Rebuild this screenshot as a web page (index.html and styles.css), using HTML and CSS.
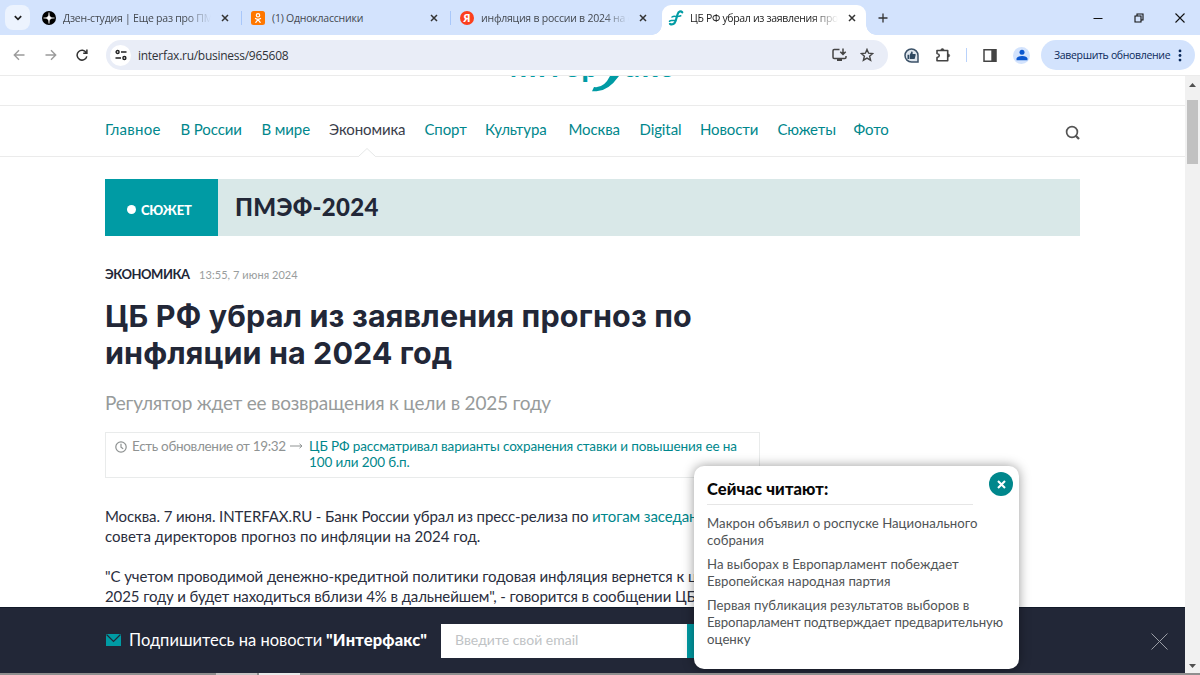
FILE: index.html
```html
<!DOCTYPE html>
<html lang="ru">
<head>
<meta charset="utf-8">
<title>ЦБ РФ убрал из заявления прогноз по инфляции на 2024 год</title>
<link rel="stylesheet" href="styles.css">
</head>
<body>
<div class="window">
  <div class="tabs">
    <div class="tab-search"><svg width="10" height="8" viewBox="0 0 10 8"><path d="M1.8 2.2 5 5.3 8.2 2.2" fill="none" stroke="#1f1f1f" stroke-width="1.7"/></svg></div>
    <div class="tab tab-1">
      <svg width="14" height="14" viewBox="0 0 14 14"><circle cx="7" cy="7" r="7" fill="#000"/><path d="M7 1.5C7.2 5.8 8.2 6.8 12.5 7 8.2 7.2 7.2 8.2 7 12.5 6.8 8.2 5.8 7.2 1.5 7 5.800 6.8 6.8 5.8 7 1.500Z" fill="#fff" stroke="#fff" stroke-width=".5"/></svg>
      <span class="tab-title fade">Дзен-студия | Еще раз про ПМ</span>
      <svg class="x" viewBox="0 0 8 8"><path d="M1 1 7 7M7 1 1 7"/></svg>
    </div>
    <div class="tab tab-2">
      <svg width="14" height="14" viewBox="0 0 14 14"><rect width="14" height="14" rx="2.500" fill="#ff7700"/><circle cx="7" cy="4.300" r="1.700" fill="none" stroke="#fff" stroke-width="1.200"/><path d="M4.500 7.500Q7 9.200 9.500 7.500M7 8.600 4.800 11.300M7 8.600 9.200 11.300" fill="none" stroke="#fff" stroke-width="1.300" stroke-linecap="round"/></svg>
      <span class="tab-title">(1) Одноклассники</span>
      <svg class="x" viewBox="0 0 8 8"><path d="M1 1 7 7M7 1 1 7"/></svg>
    </div>
    <div class="tab tab-3">
      <span class="ya">Я</span>
      <span class="tab-title fade">инфляция в россии в 2024 на с</span>
      <svg class="x" viewBox="0 0 8 8"><path d="M1 1 7 7M7 1 1 7"/></svg>
    </div>
    <div class="tab tab-4 active">
      <svg width="16" height="16" viewBox="0 0 16 16" fill="none" stroke="#009ba4" stroke-linecap="round"><path d="M14.200 2.300C12.800 .6 10.500 1.300 9.500 4.500L7.600 11C6.700 14 4 15.300 2 13.800" stroke-width="2.200"/><path d="M4 7C6.500 5.300 9 7.600 12.800 5.800M1.500 11.300C3 9.300 5 11.300 7.500 10.300" stroke-width="1.500"/></svg>
      <span class="tab-title fade">ЦБ РФ убрал из заявления прог</span>
      <svg class="x" viewBox="0 0 8 8"><path d="M1 1 7 7M7 1 1 7"/></svg>
    </div>
    <svg class="plus" width="10" height="10" viewBox="0 0 10 10"><path d="M5 .5v9M.5 5h9" stroke="#333" stroke-width="1.300"/></svg>
    <div class="controls">
      <svg width="10" height="10" viewBox="0 0 10 10"><path d="M.5 5.500h9" stroke="#111"/></svg>
      <svg width="10" height="10" viewBox="0 0 10 10" fill="none" stroke="#111" stroke-width="1.100"><path d="M1 3h6v6H1zM3 3V1h6v6H7"/></svg>
      <svg width="10" height="10" viewBox="0 0 10 10"><path d="M.5.5l9 9M9.500.5l-9 9" stroke="#111" stroke-width="1.100"/></svg>
    </div>
  </div>

  <div class="toolbar">
    <svg class="nav-ico" viewBox="0 0 12 12" stroke="#9b9b9b"><path d="M11.500 6H1.500M6 1.300 1.300 6 6 10.700"/></svg>
    <svg class="nav-ico" viewBox="0 0 12 12" stroke="#9b9b9b"><path d="M.5 6H10.500M6 1.300 10.700 6 6 10.700"/></svg>
    <svg class="nav-ico" viewBox="0 0 12 12" stroke="#333"><path d="M10.300 3.800A4.900 4.900 0 1 0 10.800 7.300M10.900.6V4.300H7.200" stroke-width="1.500"/></svg>
    <div class="address">
      <span class="site-info"><svg width="12" height="12" viewBox="0 0 12 12" fill="none" stroke="#222" stroke-width="1.400"><circle cx="2.600" cy="3" r="1.500"/><path d="M6 3h5.500M.5 9H6"/><circle cx="9.400" cy="9" r="1.500"/></svg></span>
      <span class="url">interfax.ru/business/965608</span>
      <svg class="install" width="15" height="14" viewBox="0 0 15 14" fill="none" stroke="#444" stroke-width="1.500"><path d="M7.500 1.500H2.200Q1 1.500 1 2.700V9.300Q1 10.500 2.200 10.500H12.800Q14 10.500 14 9.300V8M11 .5V6M8.300 3.700 11 6.400 13.700 3.700"/><path d="M5 12h5" stroke-width="2"/></svg>
      <svg width="14" height="14" viewBox="0 0 14 14" fill="none" stroke="#444" stroke-width="1.400"><path d="M7 1.400 8.600 5.200 12.700 5.500 9.600 8.200 10.600 12.200 7 10.100 3.400 12.200 4.400 8.200 1.300 5.500 5.400 5.200Z"/></svg>
    </div>
    <svg class="like" width="15" height="15" viewBox="0 0 15 15"><path d="M7.500 1A6.500 6.500 0 1 0 7.500 14H14V7.500A6.500 6.500 0 0 0 7.500 1Z" fill="#dfe6ee" stroke="#3c5268" stroke-width="1.500"/><path d="M3.500 6.800h1.700v4.200H3.500zM5.800 6.800 7.700 3.200Q9.200 3.300 8.600 6H11.300Q11.900 6.300 11.600 7.300L10.800 10.500Q10.600 11 10 11H5.800Z" fill="#2f4961"/></svg>
    <svg class="puzzle" width="16" height="16" viewBox="0 0 16 16" fill="none" stroke="#444" stroke-width="1.600"><path d="M2 3.500H12.700V13.700H2V10.600Q4.300 10 4.300 8.500T2 6.500Z" stroke-linejoin="round"/><path d="M5.800 3.200Q5.800 1.500 7.400 1.500T9 3.200ZM13 7Q14.700 7 14.700 8.500T13 10Z" fill="#444" stroke-width=".6"/></svg>
    <span class="sep"></span>
    <svg class="panel" width="14" height="13" viewBox="0 0 14 13"><path d="M1 .8h12v11.400H1z" fill="none" stroke="#444" stroke-width="1.500"/><path d="M8.300.8H13v11.400H8.300z" fill="#444"/></svg>
    <span class="avatar"><svg width="12" height="12" viewBox="0 0 12 12" fill="#0b57d0"><circle cx="6" cy="3.200" r="2.500"/><path d="M.5 11.300V9.500Q1.200 7.100 6 7T11.500 9.500V11.300Z"/></svg></span>
    <div class="update"><span>Завершить обновление</span><svg width="4" height="13" viewBox="0 0 4 13" fill="#0b2a5b"><circle cx="2" cy="1.900" r="1.400"/><circle cx="2" cy="6.500" r="1.400"/><circle cx="2" cy="11.100" r="1.400"/></svg></div>
  </div>

  <div class="viewport">
    <div class="page">
      <div class="masthead">
        <svg class="logo" width="170" height="16" viewBox="0 0 170 16"><text class="logo-text" x="0" y="1" textLength="88">интер</text><text class="logo-text" x="115" y="1" textLength="48">акс</text><path d="M109 0Q98 15.500 86 15.200H82L84 11Q94 12.500 100 0Z" fill="#009ba4"/></svg>
      </div>
      <div class="menu">
        <nav class="links">
          <a class="first">Главное</a><a>В России</a><a>В мире</a><a class="current">Экономика</a><a>Спорт</a><a>Культура</a><a>Москва</a><a>Digital</a><a>Новости</a><a>Сюжеты</a><a>Фото</a>
        </nav>
        <svg class="search" width="16" height="16" viewBox="0 0 16 16" fill="none" stroke="#555" stroke-width="1.700"><circle cx="7" cy="7" r="5.400"/><path d="M10.500 10.500 14 14" stroke-width="2.300"/></svg>
        <svg class="notch" width="18" height="10" viewBox="0 0 18 10"><path d="M1 9 9 1.500 17 9V10H1Z" fill="#fff"/><path d="M1 9 9 1.500 17 9" fill="none" stroke="#e6e8e8"/></svg>
      </div>

      <main class="content">
        <div class="story"><span class="story-tag"><i></i>СЮЖЕТ</span><span class="story-name">ПМЭФ-2024</span></div>
        <div class="meta"><span class="rubric">ЭКОНОМИКА</span><span class="date">13:55, 7 июня 2024</span></div>
        <h1><span class="h-a">ЦБ РФ убрал из заявления прогноз по</span><br><span class="h-b">инфляции на 2024 год</span></h1>
        <div class="lead">Регулятор ждет ее возвращения к цели в 2025 году</div>
        <div class="related">
          <svg width="12" height="12" viewBox="0 0 12 12" fill="none" stroke="#8d9191" stroke-width="1.200"><circle cx="6" cy="6" r="5.200"/><path d="M6 2.800V6.300L8.200 7.800"/></svg>
          <span class="related-when">Есть обновление от 19:32 <svg width="13" height="6" viewBox="0 0 13 6"><path d="M0 3H12M9.500.8 12 3 9.500 5.200" fill="none" stroke="#8f9393"/></svg></span>
          <a class="related-link">ЦБ РФ рассматривал варианты сохранения ставки и повышения ее на<br>100 или 200 б.п.</a>
        </div>
        <p class="p-1"><span>Москва. 7 июня. INTERFAX.RU - Банк России убрал из пресс-релиза по <a>итогам заседан</a></span><br><span class="wide">совета директоров прогноз по инфляции на 2024 год.</span></p>
        <p><span class="tight">"С учетом проводимой денежно-кредитной политики годовая инфляция вернется к ц</span><br><span>2025 году и будет находиться вблизи 4% в дальнейшем", - говорится в сообщении ЦБ</span></p>
      </main>

      <div class="subscribe">
        <svg width="15" height="12" viewBox="0 0 15 12"><path d="M0 0h15v12H0z" fill="#009ba4"/><path d="M.5.5 7.500 7.500 14.500.5" fill="none" stroke="#222737" stroke-width="1.200"/></svg>
        <span class="sub-text">Подпишитесь на новости</span><b>"Интерфакс"</b>
        <div class="email">Введите свой email</div><div class="go"></div>
        <svg class="dismiss" width="17" height="17" viewBox="0 0 17 17"><path d="M.5.5l16 16M16.500.5l-16 16" stroke="#9a9da5"/></svg>
      </div>

      <aside class="popup">
        <div class="popup-title">Сейчас читают:</div>
        <div class="popup-item">Макрон объявил о роспуске Национального<br>собрания</div>
        <div class="popup-item">На выборах в Европарламент побеждает<br>Европейская народная партия</div>
        <div class="popup-item">Первая публикация результатов выборов в<br><span class="snug">Европарламент подтверждает предварительную</span><br>оценку</div>
        <span class="popup-close"><svg width="9" height="9" viewBox="0 0 9 9"><path d="M1 1l7 7M8 1l-7 7" stroke="#fff" stroke-width="2.100"/></svg></span>
      </aside>
    </div>
    <div class="scrollbar">
      <svg width="7" height="4" viewBox="0 0 7 4"><path d="M3.500 0 7 4H0Z" fill="#505050"/></svg>
      <span class="thumb"></span>
      <svg class="down" width="7" height="4" viewBox="0 0 7 4"><path d="M0 0H7L3.500 4Z" fill="#505050"/></svg>
    </div>
  </div>
  <div class="edge"><i></i><i class="light"></i></div>
</div>
</body>
</html>
```
FILE: styles.css
```css
* { box-sizing: border-box; }
body { margin: 0; overflow: hidden; font-family: "Lato", "Open Sans", sans-serif; }
svg { display: block; flex: none; }
.window { width: 1200px; height: 675px; display: flex; flex-direction: column; background: #fff; }

/* Tab strip */
.tabs { height: 35px; flex: none; display: flex; align-items: center; background: #d3e3fd; font: 10.500px/14px "Open Sans", sans-serif; color: #444950; position: relative; }
.tab-search { width: 25px; height: 25px; margin-left: 5px; border-radius: 8px; background: #ecf3fe; display: flex; align-items: center; justify-content: center; }
.tab { height: 35px; display: flex; align-items: center; }
.tab-title { white-space: nowrap; overflow: hidden; margin-left: 7px; flex: 1; letter-spacing: -.22px; padding-top: 1px; }
.fade { -webkit-mask-image: linear-gradient(90deg, #000 calc(100% - 26px), transparent); mask-image: linear-gradient(90deg, #000 calc(100% - 26px), transparent); }
.x { width: 8px; height: 8px; margin-left: 10px; }
.x path { stroke: #333; stroke-width: 1.500; }
.tab-1 { width: 187px; margin-left: 12px; }
.tab-2 { width: 197px; padding-left: 9px; margin-left: 12px; border-image: linear-gradient(#0000 32%, #a8c7fa 32% 70%, #0000 70%) 1; border-left: 1px solid; }
.tab-3 { width: 197px; padding-left: 9px; margin-left: 12px; border-image: linear-gradient(#0000 32%, #a8c7fa 32% 70%, #0000 70%) 1; border-left: 1px solid; }
.ya { width: 14px; height: 14px; border-radius: 7px; background: #fc3f1d; color: #fff; font: 700 11px/14px "Open Sans", sans-serif; text-align: center; }
.tab-4 { width: 204px; height: 30px; margin: 5px 0 0 15px; padding: 0 10px 0 6px; border-radius: 9px 9px 0 0; background: #fff; color: #222; position: relative; }
.tab-4 > * { margin-top: -5px; }
.tab-4 .tab-title { margin-left: 6px; letter-spacing: -.32px; }
.tab-4::before, .tab-4::after { content: ""; position: absolute; bottom: 0; width: 10px; height: 10px; }
.tab-4::before { left: -10px; background: radial-gradient(circle at 0 0, #0000 9.500px, #fff 10px); }
.tab-4::after { right: -10px; background: radial-gradient(circle at 100% 0, #0000 9.500px, #fff 10px); }
.plus { margin-left: 12px; }
.controls { margin-left: auto; margin-right: 15px; display: flex; gap: 31px; }

/* Toolbar */
.toolbar { height: 41px; flex: none; display: flex; align-items: center; border-bottom: 1px solid #ebebeb; padding-left: 13px; }
.nav-ico { width: 12px; height: 12px; margin-right: 19.500px; fill: none; stroke-width: 1.400; }
.address { width: 782px; height: 30px; border-radius: 15px; background: #e9edf7; display: flex; align-items: center; padding: 0 14px 0 4px; margin-left: -1.500px; }
.site-info { width: 21px; height: 21px; border-radius: 50%; background: #fff; display: flex; align-items: center; justify-content: center; }
.url { font: 12px/16px "Open Sans", sans-serif; letter-spacing: -.27px; color: #2f3237; margin-left: 7px; padding-top: 1px; }
.install { margin-left: auto; margin-right: 13px; }
.like { margin-left: 16px; }
.puzzle { margin-left: 16px; }
.sep { width: 1px; height: 14px; background: #b9d2fb; margin-left: 15px; }
.panel { margin-left: 16px; }
.avatar { width: 17px; height: 17px; border-radius: 50%; background: #d3e3fd; margin-left: 16px; display: flex; align-items: center; justify-content: center; }
.update { width: 154px; height: 30px; margin-left: 11px; border-radius: 15px; background: #d3e3fd; color: #0b2a5b; font: 10.500px/14px "Open Sans", sans-serif; letter-spacing: -.33px; display: flex; align-items: center; justify-content: space-between; padding: 0 13px; }

/* Page */
.viewport { flex: 1; min-height: 0; display: flex; }
.page { width: 1185px; position: relative; overflow: hidden; }
.masthead { height: 30px; border-bottom: 1px solid #ebebeb; padding-left: 510px; }
.logo { overflow: hidden; }
.logo-text { font: 900 29px "Lato", sans-serif; fill: #009ba4; }
.menu { height: 51px; border-bottom: 1px solid #ebebeb; padding: 0 104px 0 105px; display: flex; justify-content: space-between; position: relative; }
.links { display: grid; grid-template-columns: 75.500px 81px 67.500px 95.500px 60.500px 83.500px 71px 60.500px 77.500px 76px 40px; font-size: 15px; line-height: 20px; padding-top: 13px; letter-spacing: -.1px; color: #00878c; }
.links .first { letter-spacing: .3px; }
.links .current { color: #3a3d4a; }
.search { margin-top: 19px; }
.notch { position: absolute; left: 358px; bottom: -1px; }
.content { padding: 22px 105px 0; }
.story { height: 57px; display: flex; background: #d9e8e8; }
.story-tag { width: 113px; background: #009ba4; color: #fff; font-weight: 900; font-size: 13px; letter-spacing: -.2px; display: flex; align-items: center; padding: 4px 0 0 22px; }
.story-tag i { width: 9px; height: 9px; border-radius: 50%; background: #fff; margin-right: 5px; }
.story-name { font-weight: 900; font-size: 24px; line-height: 56px; letter-spacing: .3px; color: #222737; margin-left: 17px; }
.meta { display: flex; align-items: baseline; margin-top: 29px; line-height: 18px; }
.rubric { font-weight: 700; font-size: 13px; letter-spacing: -.45px; color: #222737; width: 94px; }
.date { font-size: 11px; letter-spacing: .06px; color: #999d9d; }
h1 { margin: 13px 0 0; font-family: "Inter", "Lato", sans-serif; font-weight: 700; font-size: 30.500px; line-height: 37px; color: #222737; white-space: nowrap; }
.h-a { letter-spacing: .15px; }
.h-b { letter-spacing: .08px; }
.lead { font-size: 19px; line-height: 26px; letter-spacing: -.19px; color: #979b9b; margin-top: 19px; }
.related { width: 655px; height: 46px; margin-top: 16px; border: 1px solid #e9ebeb; padding: 5px 9px; display: flex; font-size: 13.500px; line-height: 16px; }
.related > svg { margin-top: 3px; }
.related-when { width: 177px; margin-left: 5px; color: #8f9393; display: flex; align-items: center; gap: 4px; height: 16px; letter-spacing: -.32px; }
.related-link { color: #00878c; letter-spacing: -.13px; white-space: nowrap; }
p { margin: 20px 0 0; font-size: 15px; line-height: 20.200px; letter-spacing: -.09px; color: #2a2e3d; white-space: nowrap; }
p a { color: #00878c; }
.p-1 { margin-top: 27.500px; }
.wide { letter-spacing: .02px; }
.tight { letter-spacing: -.07px; }

/* Subscription bar */
.subscribe { position: absolute; left: 0; right: 0; bottom: 0; height: 66px; background: #222737; border-top: 1px solid #111a29; color: #fff; display: flex; align-items: center; padding: 0 17px 2px 106px; font-size: 16.500px; }
.sub-text { margin-left: 8px; width: 197px; }
.subscribe b { font-weight: 900; width: 115px; white-space: nowrap; letter-spacing: .15px; }
.email { width: 246px; height: 34px; margin-top: 2px; background: #fff; color: #c0c3c5; font-size: 14px; line-height: 31px; padding-left: 14px; }
.go { width: 60px; height: 34px; margin-top: 2px; background: #009ba4; }
.dismiss { margin: 4px 0 0 auto; }

/* Floating list */
.popup { position: absolute; left: 694px; top: 390px; width: 325px; height: 203px; background: #fff; border-radius: 10px; box-shadow: 0 0 12px #0006; padding: 12px 13px; color: #505456; }
.popup-title { width: 266px; height: 27px; border-bottom: 1px solid #e6e6e6; font-weight: 900; font-size: 16.500px; line-height: 23px; letter-spacing: .12px; color: #080808; margin-bottom: 10px; }
.popup-item { font-size: 13.200px; line-height: 16.600px; margin-bottom: 8px; white-space: nowrap; letter-spacing: .02px; }
.snug { letter-spacing: -.09px; }
.popup-close { position: absolute; right: 6px; top: 6px; width: 24px; height: 24px; border-radius: 50%; background: #00878c; display: flex; align-items: center; justify-content: center; }

.scrollbar { width: 15px; background: #f1f1f1; display: flex; flex-direction: column; align-items: center; padding: 7px 0 5px; }
.thumb { width: 11px; height: 64px; background: #c1c1c1; margin-top: 13px; }
.down { margin-top: auto; }
.edge { height: 2px; flex: none; background: #8f8f8f; display: flex; padding-left: 216px; gap: 2px; }
.edge i { width: 41px; background: #c8c4c4; }
.edge .light { background: #e9e9e9; }
```
